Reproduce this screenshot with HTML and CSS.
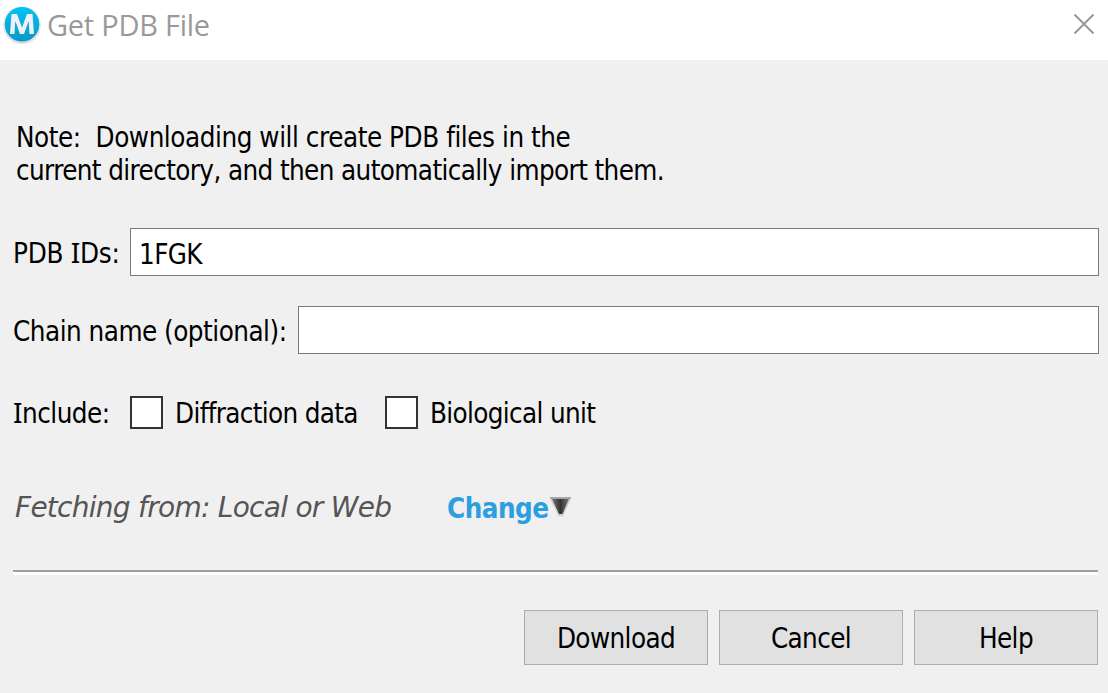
FILE: index.html
```html
<!DOCTYPE html>
<html lang="en">
<head>
<meta charset="utf-8">
<title>Get PDB File</title>
<link rel="stylesheet" href="styles.css">
</head>
<body>
<div class="dialog">
  <header class="titlebar">
    <svg class="logo" width="44" height="48" viewBox="0 0 44 48" aria-hidden="true">
      <defs>
        <linearGradient id="disc" x1="0" y1="0" x2="0" y2="1"><stop offset="0" stop-color="#02c3f5"/><stop offset="1" stop-color="#0799c5"/></linearGradient>
        <linearGradient id="rim" x1="0" y1="0" x2="0" y2="1"><stop offset="0" stop-color="#f4f3f8"/><stop offset="1" stop-color="#dddbe4"/></linearGradient>
      </defs>
      <circle cx="22" cy="25" r="19" fill="url(#rim)"/>
      <circle cx="22" cy="24.3" r="17.3" fill="url(#disc)"/>
      <path d="M10 34L11.500 14h5.500l5 13.500L27 14h5.500L34 34h-4.500l-.8-13L24 34h-4L15.300 21l-.8 13z" fill="#f0eff5"/>
    </svg>
    <h1 class="title">Get PDB File</h1>
    <svg class="close" width="24" height="24" viewBox="0 0 24 24" aria-label="Close"><path d="M2.500 2.500l19 19M21.500 2.500l-19 19" stroke="#959595" stroke-width="1.8" fill="none"/></svg>
  </header>
  <main class="content">
    <p class="note"><span class="note-first">Note:&nbsp; Downloading will create PDB files in the</span><br><span class="note-second">current directory, and then automatically import them.</span></p>
    <div class="row">
      <label class="label label-ids" for="ids">PDB <span class="barred">I</span>Ds:</label>
      <input class="field" id="ids" type="text" value="1FGK">
    </div>
    <div class="row row-chain">
      <label class="label label-chain" for="chain">Chain name (optional):</label>
      <input class="field" id="chain" type="text">
    </div>
    <div class="row row-include">
      <span class="label label-include"><span class="barred">I</span>nclude:</span>
      <label class="option option-data"><input class="box" type="checkbox"><span class="option-text">Diffraction data</span></label>
      <label class="option"><input class="box" type="checkbox"><span class="option-text">Biological unit</span></label>
    </div>
    <div class="row row-source">
      <span class="source">Fetching from: Local or Web</span>
      <a class="change">Change</a>
      <svg class="arrow" width="21" height="22" viewBox="0 0 21 22" aria-hidden="true">
        <defs>
          <linearGradient id="shade" x1="0" y1="0" x2="1" y2="0"><stop offset="0" stop-color="#777"/><stop offset=".5" stop-color="#333"/><stop offset="1" stop-color="#777"/></linearGradient>
        </defs>
        <path d="M0 1h21v2L13 20.500H8.500L0 3z" fill="#d2d2d2"/>
        <path d="M0 1h21v2H0z" fill="#a8a8a8"/>
        <path d="M2 3h17L12.500 18H9z" fill="url(#shade)"/>
      </svg>
    </div>
    <div class="rule"></div>
    <footer class="actions">
      <button class="button">Download</button>
      <button class="button">Cancel</button>
      <button class="button">Help</button>
    </footer>
  </main>
</div>
</body>
</html>
```
FILE: styles.css
```css
* { box-sizing: border-box; }
body { margin: 0; background: #f0f0f0; }
.dialog {
  width: 1108px;
  height: 693px;
  overflow: hidden;
  background: #f0f0f0;
  color: #000;
  font: 27.5px/33px "DejaVu Sans Condensed", "DejaVu Sans", sans-serif;
  font-stretch: condensed;
  letter-spacing: -.6px;
}
.titlebar {
  display: flex;
  height: 60px;
  background: #fff;
}
.logo { flex: none; }
.title {
  margin: 5px 0 0 3px;
  font: 400 29px/40px "Open Sans", sans-serif;
  letter-spacing: -.25px;
  color: #999;
}
.close { margin: 12px 12px 0 auto; }
.content { padding: 61px 10px 0 13px; }
.note { margin: 0 0 41px 3px; white-space: nowrap; }
.note-first { letter-spacing: -.44px; }
.note-second { letter-spacing: -.6px; }
.row {
  display: flex;
  align-items: center;
  height: 48px;
  margin-right: -1px;
  white-space: nowrap;
}
.label { flex: none; padding-top: 3px; }
.label-ids, .label-include { width: 117px; }
.label-ids { letter-spacing: -.25px; }
.label-include { letter-spacing: -.5px; }
.label-chain { width: 285px; letter-spacing: -.5px; }
.barred { font: 28px/0 "Noto Sans", sans-serif; }
.field {
  flex: 1;
  min-width: 0;
  height: 48px;
  padding: 3px 8px 0;
  border: 1px solid #7a7a7a;
  border-radius: 0;
  background: #fff;
  color: #000;
  font: inherit;
  letter-spacing: inherit;
  outline: 0;
}
.row-chain { margin-top: 30px; }
.row-include { height: 33px; margin-top: 42px; }
.row-include .label, .option-text { padding-top: 1px; }
.option { display: flex; align-items: center; letter-spacing: -.65px; }
.option-data { width: 255px; }
.box {
  appearance: none;
  width: 33px;
  height: 33px;
  margin: 0 12px 0 0;
  border: 2px solid #333;
  background: #fff;
}
.row-source { height: 48px; margin-top: 53px; }
.source {
  width: 433px;
  padding: 3px 0 0 2px;
  font-family: "DejaVu Sans", sans-serif;
  font-size: 28px;
  font-stretch: normal;
  font-style: italic;
  letter-spacing: -.73px;
  color: #555;
}
.change {
  width: 104px;
  padding: 5px 0 0 1px;
  font-weight: 700;
  letter-spacing: -.5px;
  color: #2d9ee0;
}
.arrow { margin-top: 1px; }
.rule {
  height: 5px;
  margin-top: 40px;
  border-top: 2px solid #a0a0a0;
  background: #fff;
}
.actions {
  display: flex;
  justify-content: flex-end;
  gap: 11px;
  margin-top: 35px;
}
.button {
  width: 184px;
  height: 55px;
  padding: 1px 0 0;
  border: 1px solid #adadad;
  border-radius: 0;
  background: #e1e1e1;
  color: #000;
  font: inherit;
  letter-spacing: inherit;
}
```
